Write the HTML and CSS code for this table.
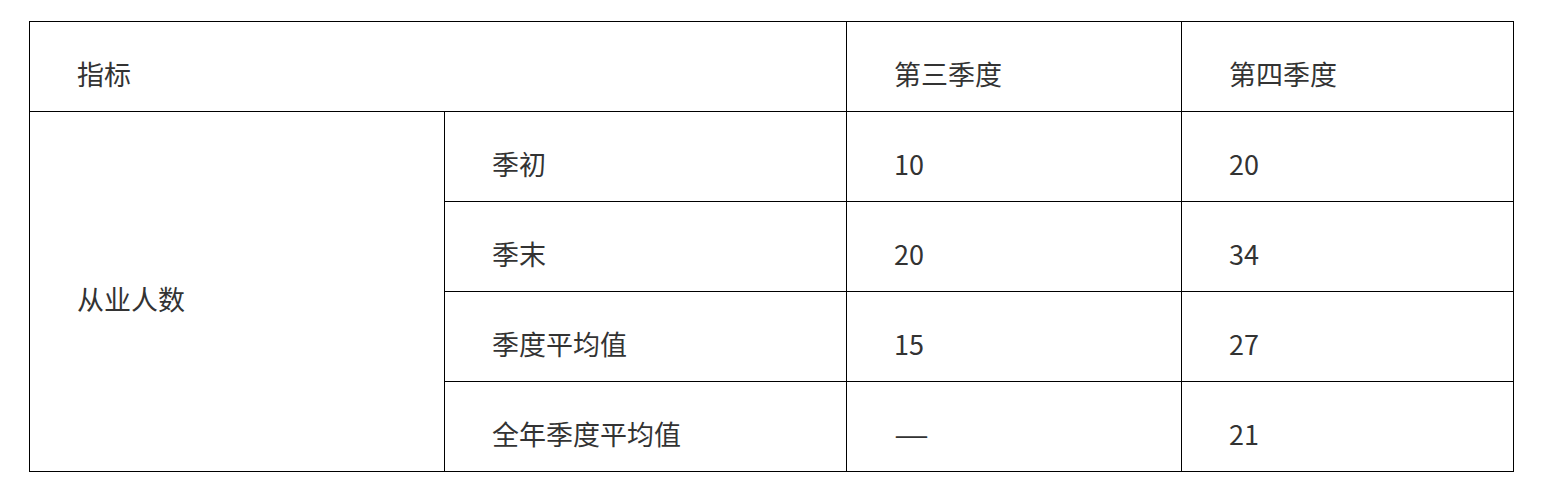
FILE: index.html
```html
<!DOCTYPE html>
<html lang="zh">
<head>
<meta charset="utf-8">
<link rel="stylesheet" href="styles.css">
</head>
<body>
<table class="stats">
  <colgroup>
    <col class="c1"><col class="c2"><col class="c3"><col class="c4">
  </colgroup>
  <tr>
    <td colspan="2">指标</td>
    <td>第三季度</td>
    <td>第四季度</td>
  </tr>
  <tr>
    <td rowspan="4">从业人数</td>
    <td>季初</td>
    <td>10</td>
    <td>20</td>
  </tr>
  <tr>
    <td>季末</td>
    <td>20</td>
    <td>34</td>
  </tr>
  <tr>
    <td>季度平均值</td>
    <td>15</td>
    <td>27</td>
  </tr>
  <tr>
    <td>全年季度平均值</td>
    <td><span class="dash">—</span></td>
    <td>21</td>
  </tr>
</table>
</body>
</html>
```
FILE: styles.css
```css
html, body {
  margin: 0;
  background: #fff;
}
body {
  padding: 21px 0 0 29px;
  font-family: "Noto Sans CJK SC", "Noto Sans", sans-serif;
  color: #333;
}
.stats {
  border-collapse: collapse;
  table-layout: fixed;
  width: 1484px;
}
.c1 { width: 415px; }
.c2 { width: 402px; }
.c3 { width: 335px; }
.c4 { width: 332px; }
.stats td {
  border: 1px solid #000;
  height: 90px;
  box-sizing: border-box;
  padding: 15px 48px 0 47px;
  font-size: 27px;
  line-height: 30px;
  vertical-align: middle;
}
.dash {
  display: inline-block;
  transform: scaleX(1.45);
  transform-origin: left center;
}
```
